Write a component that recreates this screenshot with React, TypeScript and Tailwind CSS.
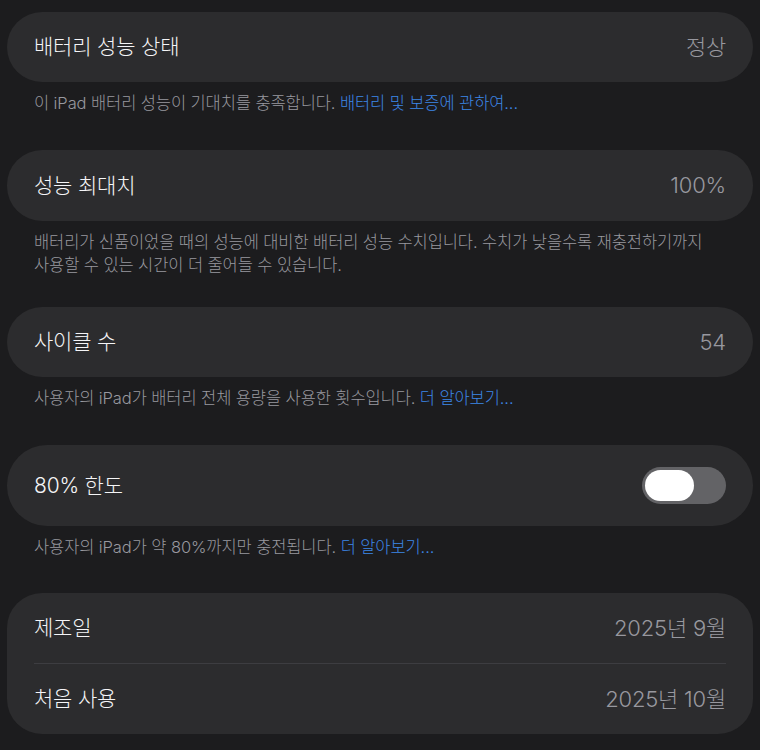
import React from "react";

const font = { fontFamily: 'Inter, "Noto Sans CJK KR", sans-serif' };

function Card({ children, className = "" }: { children: React.ReactNode; className?: string }) {
  return <div className={`mx-[7px] rounded-[35px] bg-[#2c2c2e] ${className}`}>{children}</div>;
}

function Row({ label, value, height = "h-[70px]" }: { label: string; value?: React.ReactNode; height?: string }) {
  return (
    <div className={`flex ${height} items-center justify-between px-[27px]`}>
      <span className="text-[21px] font-light tracking-[-0.2px] text-[#f5f5f7]">{label}</span>
      {value !== undefined && (
        <span className="text-[22px] font-light tracking-[-0.2px] text-[#98989f]">{value}</span>
      )}
    </div>
  );
}

function Footer({ children, last = "pb-[35px]" }: { children: React.ReactNode; last?: string }) {
  return (
    <p className={`px-[34px] pt-[10px] ${last} text-[16.5px] font-light leading-[23px] tracking-[-0.1px] text-[#98989f]`}>
      {children}
    </p>
  );
}

function Link({ children }: { children: React.ReactNode }) {
  return <span className="text-[#3c87e8]">{children}</span>;
}

function Toggle() {
  return (
    <div className="flex h-[37px] w-[84px] items-center rounded-full bg-[#636366] px-[3px]">
      <div className="h-[31px] w-[49px] rounded-full bg-white" />
    </div>
  );
}

export default function App() {
  return (
    <div className="min-h-[750px] w-[760px] overflow-hidden bg-[#1c1c1e] pt-[12px]" style={font}>
      <Card>
        <Row label="배터리 성능 상태" value="정상" />
      </Card>
      <Footer>
        이 iPad 배터리 성능이 기대치를 충족합니다. <Link>배터리 및 보증에 관하여...</Link>
      </Footer>

      <Card>
        <Row label="성능 최대치" value="100%" height="h-[71px]" />
      </Card>
      <Footer last="pb-[30px]">
        배터리가 신품이었을 때의 성능에 대비한 배터리 성능 수치입니다. 수치가 낮을수록 재충전하기까지
        <br />
        사용할 수 있는 시간이 더 줄어들 수 있습니다.
      </Footer>

      <Card>
        <Row label="사이클 수" value="54" />
      </Card>
      <Footer>
        사용자의 iPad가 배터리 전체 용량을 사용한 횟수입니다. <Link>더 알아보기...</Link>
      </Footer>

      <Card className="rounded-[40px]">
        <Row label="80% 한도" value={<Toggle />} height="h-[81px]" />
      </Card>
      <Footer last="pb-[34px]">
        사용자의 iPad가 약 80%까지만 충전됩니다. <Link>더 알아보기...</Link>
      </Footer>

      <Card className="rounded-[30px]">
        <Row label="제조일" value="2025년 9월" />
        <div className="mx-[27px] h-px bg-[#3d3d41]" />
        <Row label="처음 사용" value="2025년 10월" />
      </Card>
    </div>
  );
}
